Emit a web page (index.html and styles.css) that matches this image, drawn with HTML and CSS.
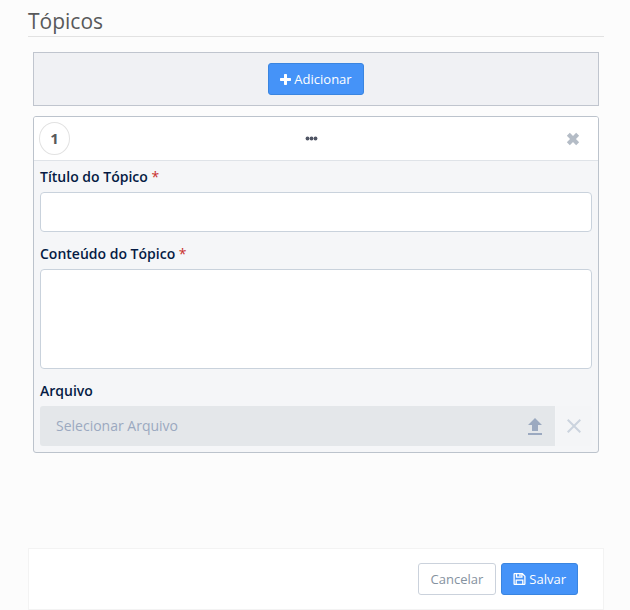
FILE: index.html
```html
<!DOCTYPE html>
<html lang="pt-BR">
<head>
    <meta charset="UTF-8">
    <meta name="viewport" content="width=device-width, initial-scale=1.0">
    <title>Tópicos</title>
    <link rel="stylesheet" href="styles.css">
</head>
<body>
    <form class="container">
        <h1 class="title">Tópicos</h1>

        <div class="topics">
            <div class="toolbar">
                <button type="button" class="btn btn-primary">
                    <svg class="icon-plus" viewBox="0 0 11 11" aria-hidden="true"><path d="M4.700 0h1.600q.7 0 .7.7V4h3.300q.7 0 .7.7v1.600q0 .7-.7.7H7v3.300q0 .7-.7.7H4.700q-.7 0-.7-.7V7H.7Q0 7 0 6.300V4.700Q0 4 .7 4H4V.7Q4 0 4.700 0z"/></svg>
                    Adicionar
                </button>
            </div>

            <div class="card">
                <div class="card-header">
                    <span class="number">1</span>
                    <svg class="icon-dots" viewBox="0 0 13 5" aria-hidden="true"><circle cx="2.500" cy="2.500" r="1.900"/><circle cx="6.500" cy="2.500" r="1.900"/><circle cx="10.500" cy="2.500" r="1.900"/></svg>
                    <button type="button" class="remove" aria-label="Remover">
                        <svg viewBox="0 0 12 12" aria-hidden="true"><path d="M2 2l8 8M10 2L2 10"/></svg>
                    </button>
                </div>

                <div class="card-body">
                    <div class="field">
                        <label for="titulo">Título do Tópico <span class="required">*</span></label>
                        <input type="text" id="titulo" class="control">
                    </div>
                    <div class="field">
                        <label for="conteudo">Conteúdo do Tópico <span class="required">*</span></label>
                        <textarea id="conteudo" class="control content"></textarea>
                    </div>
                    <div class="field">
                        <label for="arquivo">Arquivo</label>
                        <div class="file">
                            <label class="file-select">
                                <span>Selecionar Arquivo</span>
                                <svg class="icon-upload" viewBox="0 0 14 17" aria-hidden="true"><path d="M7 0l7 7h-4v6H4V7H0zM0 15h14v2H0z"/></svg>
                                <input type="file" id="arquivo">
                            </label>
                            <button type="button" class="file-clear" aria-label="Limpar arquivo" disabled>
                                <svg viewBox="0 0 14 14" aria-hidden="true"><path d="M.7.7l12.600 12.600M13.300.7L.7 13.300"/></svg>
                            </button>
                        </div>
                    </div>
                </div>
            </div>
        </div>

        <div class="footer">
            <button type="button" class="btn btn-default">Cancelar</button>
            <button type="submit" class="btn btn-primary">
                <svg class="icon-save" viewBox="0 0 12 12" aria-hidden="true"><path d="M.6 1.200q0-.6.6-.6h7.600l2.600 2.600v7.600q0 .6-.6.6H1.200q-.6 0-.6-.6zM3 .6v3.600h5.400V.6M2.700 11.400V7.100h6.600v4.300"/><path d="M6.500 1v2.500"/></svg>
                Salvar
            </button>
        </div>
    </form>
</body>
</html>
```

FILE: styles.css
```css
*, *::before, *::after{
    margin: 0;
    padding: 0;
    box-sizing: border-box;
}

body{
    background-color: #fcfcfc;
    font-family: "Open Sans", sans-serif;
    font-size: 14px;
    line-height: 20px;
    color: #051b44;
}
button, input, textarea{
    font: inherit;
}
svg{
    display: block;
    fill: currentColor;
}
.container{
    padding: 6px 26px 0 28px;
}
.title{
    border-bottom: 1px solid #e2e2e2;
    font-size: 21px;
    font-weight: 400;
    line-height: 30px;
    color: #58595b;
}
.topics{
    padding: 15px 5px;
}

.toolbar{
    display: flex;
    justify-content: center;
    padding: 10px;
    border: 1px solid #c0c5ce;
    background-color: #f0f1f4;
}
.btn{
    display: flex;
    align-items: center;
    gap: 3px;
    height: 32px;
    padding: 0 12px;
    border: 1px solid #cbd2dc;
    border-radius: 3px;
    font-size: 13px;
    cursor: pointer;
}
.btn-primary{
    padding: 0 11px;
    border-color: #3a85e0;
    background-color: #4593f8;
    color: #fff;
}
.btn-default{
    background-color: #fff;
    color: #8592a0;
}
.icon-plus{
    width: 11px;
    height: 11px;
}
.icon-save{
    width: 13px;
    height: 12px;
    fill: none;
    stroke: currentColor;
    stroke-width: 1.3;
}

.card{
    margin-top: 10px;
    border: 1px solid #bcc3cc;
    border-radius: 3px;
    background-color: #f5f6f8;
    overflow: hidden;
}
.card-header{
    display: grid;
    grid-template-columns: 1fr auto 1fr;
    align-items: center;
    height: 44px;
    padding: 0 14px 0 5px;
    border-bottom: 1px solid #dfe3e8;
    background-color: #fff;
}
.number{
    width: 31px;
    height: 33px;
    border: 1px solid #e2e2e2;
    border-radius: 50%;
    line-height: 31px;
    text-align: center;
    font-size: 15px;
    font-weight: 700;
    color: #58595b;
}
.icon-dots{
    width: 13px;
    height: 5px;
    color: #505564;
}
.remove{
    justify-self: end;
    padding: 0 4px;
    border: 0;
    background: none;
    color: #b4bcc6;
    cursor: pointer;
}
.remove svg{
    width: 14px;
    height: 14px;
    stroke: currentColor;
    stroke-width: 3.6;
}

.card-body{
    display: flex;
    flex-direction: column;
    gap: 12px;
    padding: 6px;
}
.field{
    display: flex;
    flex-direction: column;
    gap: 5px;
    font-weight: 600;
}
.required{
    font-weight: 400;
    color: #c9302c;
}
.control{
    width: 100%;
    height: 40px;
    padding: 0 12px;
    border: 1px solid #c9d2dc;
    border-radius: 4px;
    background-color: #fff;
    color: #051b44;
}
.content{
    height: 100px;
    padding: 8px 12px;
    resize: none;
}
.file{
    display: flex;
    gap: 1px;
    height: 40px;
    font-weight: 400;
}
.file-select{
    position: relative;
    flex: 1;
    display: flex;
    align-items: center;
    justify-content: space-between;
    padding: 0 13px 0 16px;
    border-radius: 3px 0 0 3px;
    background-color: #e4e7ea;
    color: #9ba9c0;
}
.file-select input{
    position: absolute;
    inset: 0;
    width: 100%;
    opacity: 0;
}
.icon-upload{
    width: 14px;
    height: 17px;
}
.file-clear{
    width: 36px;
    padding: 0 11px;
    border: 0;
    border-radius: 0 3px 3px 0;
    background-color: #f4f5f7;
    color: #cbd3de;
}
.file-clear svg{
    width: 14px;
    height: 14px;
    stroke: currentColor;
    stroke-width: 2;
}

.footer{
    display: flex;
    justify-content: flex-end;
    gap: 5px;
    margin-top: 80px;
    padding: 14px 25px;
    border: 1px solid #f3f3f3;
    background-color: #fff;
}
```
